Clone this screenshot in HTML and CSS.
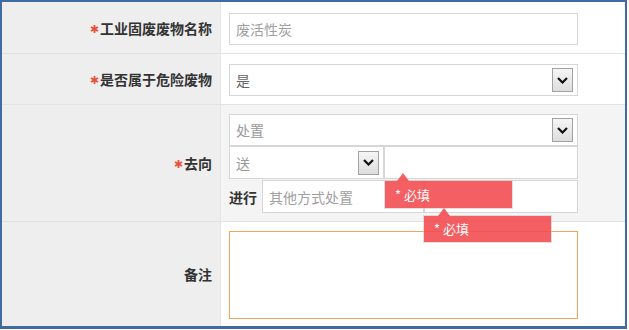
FILE: index.html
```html
<!DOCTYPE html>
<html lang="zh-CN">
<head>
  <meta charset="UTF-8">
  <title>固废信息</title>
  <link rel="stylesheet" href="styles.css">
</head>
<body>
  <div class="frame">
    <div class="form-row row-name">
      <div class="form-label"><span class="req">✱</span>工业固废废物名称</div>
      <div class="form-value">
        <input class="field field-wide" type="text" placeholder="废活性炭">
      </div>
    </div>

    <div class="form-row row-danger">
      <div class="form-label"><span class="req">✱</span>是否属于危险废物</div>
      <div class="form-value">
        <div class="field select field-wide">
          <span class="select-text dark">是</span>
          <span class="select-arrow">
            <svg width="11" height="7" viewBox="0 0 11 7"><path d="M1 1 L5.5 5.5 L10 1" fill="none" stroke="#111" stroke-width="2.2"/></svg>
          </span>
        </div>
      </div>
    </div>

    <div class="form-row row-dest">
      <div class="form-label"><span class="req">✱</span>去向</div>
      <div class="form-value value-grey">
        <div class="field select field-wide">
          <span class="select-text">处置</span>
          <span class="select-arrow">
            <svg width="11" height="7" viewBox="0 0 11 7"><path d="M1 1 L5.5 5.5 L10 1" fill="none" stroke="#111" stroke-width="2.2"/></svg>
          </span>
        </div>
        <div class="line">
          <div class="field select field-send">
            <span class="select-text">送</span>
            <span class="select-arrow">
              <svg width="11" height="7" viewBox="0 0 11 7"><path d="M1 1 L5.5 5.5 L10 1" fill="none" stroke="#111" stroke-width="2.2"/></svg>
            </span>
          </div>
          <div class="tip-anchor">
            <input class="field field-target" type="text">
            <div class="tip tip-first">* 必填</div>
          </div>
        </div>
        <div class="line line-other">
          <span class="inline-label">进行</span>
          <input class="field field-method" type="text" placeholder="其他方式处置">
          <div class="tip-anchor">
            <input class="field field-extra" type="text">
            <div class="tip tip-second">* 必填</div>
          </div>
        </div>
      </div>
    </div>

    <div class="form-row row-note">
      <div class="form-label">备注</div>
      <div class="form-value">
        <textarea class="note"></textarea>
      </div>
    </div>
  </div>
</body>
</html>
```

FILE: styles.css
```css
body {
  margin: 0;
  background-color: #fff;
  font-family: "Noto Sans CJK SC", "Noto Sans", sans-serif;
}
.frame {
  width: 623px;
  height: 324px;
  border: 2px solid #3e6ca2;
  border-bottom-width: 3px;
  display: flex;
  flex-direction: column;
}
.form-row {
  display: flex;
  border-bottom: 1px solid #e2e2e2;
}
.row-name { height: 51px; }
.row-danger { height: 50px; }
.row-dest { height: 116px; }
.row-note {
  flex: 1;
  border-bottom: none;
}
.form-label {
  width: 210px;
  padding-right: 8px;
  background-color: #eeeeee;
  border-right: 1px solid #e6e6e6;
  display: flex;
  align-items: center;
  justify-content: flex-end;
  font-size: 14px;
  font-weight: bold;
  color: #333;
}
.req {
  font-family: "DejaVu Sans", sans-serif;
  font-size: 11px;
  color: #e6533a;
  margin-right: 1px;
  margin-top: 3px;
}
.form-value {
  flex: 1;
  padding: 11px 0 0 8px;
  background-color: #fff;
}
.row-danger .form-value { padding-top: 10px; }
.row-dest .form-value,
.row-note .form-value { padding-top: 9px; }
.value-grey { background-color: #f4f4f4; }

.field {
  box-sizing: border-box;
  height: 32px;
  margin: 0;
  border: 1px solid #d6d6d6;
  background-color: #fff;
  font: inherit;
  font-size: 14px;
  color: #999;
  padding: 0 6px;
  outline: none;
}
.field::placeholder { color: #a0a0a0; }
.field-wide { width: 349px; }
.select {
  display: flex;
  align-items: center;
  justify-content: space-between;
  padding-right: 4px;
}
.select-text { color: #999; }
.select-text.dark { color: #666; }
.select-arrow {
  box-sizing: border-box;
  width: 21px;
  height: 24px;
  border: 1px solid #a2a2a2;
  background: linear-gradient(#f6f6f6, #dddddd);
  display: flex;
  align-items: center;
  justify-content: center;
}
.line {
  display: flex;
  align-items: center;
}
.line .field { height: 33px; }
.field-send { width: 155px; }
.field-target { width: 194px; }
.line-other { margin-top: 1px; }
.inline-label {
  font-size: 14px;
  font-weight: bold;
  color: #333;
  margin-right: 5px;
}
.field-method { width: 162px; }
.field-extra { width: 154px; }

.tip-anchor { position: relative; }
.tip-anchor .field { display: block; }
.tip {
  position: absolute;
  z-index: 2;
  box-sizing: border-box;
  width: 127px;
  height: 27px;
  padding-left: 10px;
  background-color: rgba(242, 78, 82, 0.9);
  box-shadow: 0 0 0 1px rgba(210, 200, 200, 0.6);
  color: #fff;
  font-size: 13px;
  line-height: 27px;
}
.tip::before {
  content: "";
  position: absolute;
  top: -8px;
  border-left: 6px solid transparent;
  border-right: 6px solid transparent;
  border-bottom: 8px solid rgba(242, 78, 82, 0.9);
}
.tip-first {
  left: 1px;
  top: 35px;
}
.tip-first::before { left: 12px; }
.tip-second {
  left: 0;
  top: 36px;
  height: 26px;
  line-height: 26px;
}
.tip-second::before { left: 14px; }

.note {
  display: block;
  box-sizing: border-box;
  width: 349px;
  height: 88px;
  margin: 0;
  border: 1px solid #f5a45a;
  background-color: #fff;
  resize: none;
  outline: none;
}
```
